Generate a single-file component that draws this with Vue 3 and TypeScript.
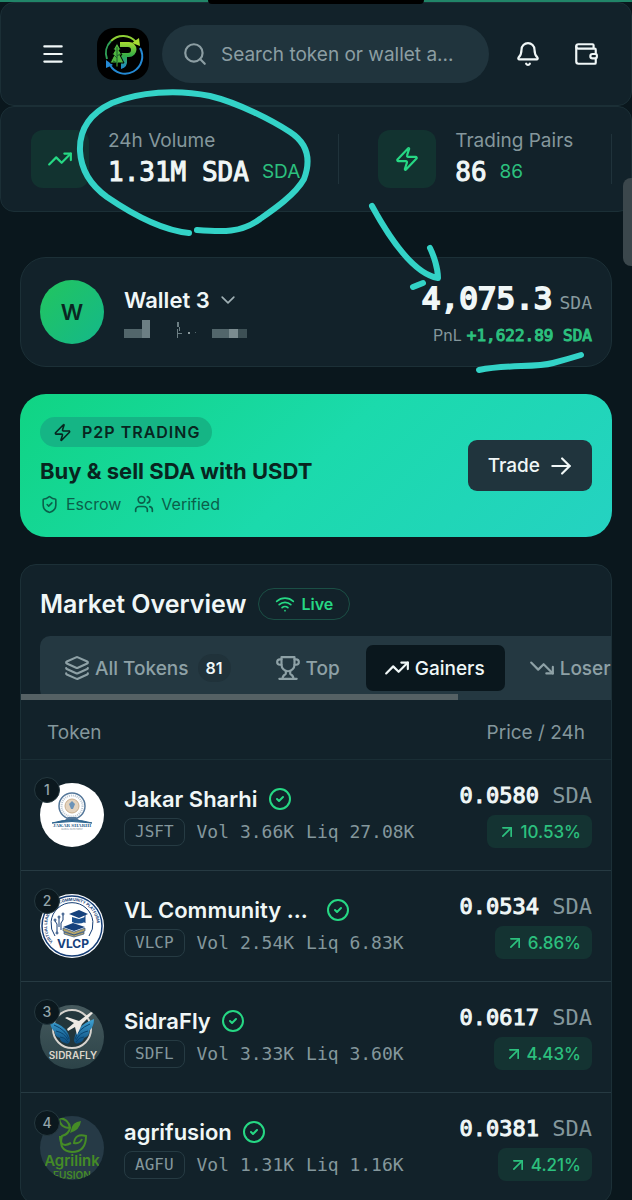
<script setup lang="ts">
import { ref } from 'vue'

interface Token {
  rank: number
  name: string
  symbol: string
  vol: string
  liq: string
  price: string
  change: string
  long?: boolean
}

type TabId = 'all' | 'top' | 'gainers' | 'losers'

const search = ref('')
const activeTab = ref<TabId>('gainers')

const icons: Record<string, string[]> = {
  menu: ['M4 5h16', 'M4 12h16', 'M4 19h16'],
  search: ['M19 11a8 8 0 1 1-16 0a8 8 0 0 1 16 0Z', 'm21 21-4.3-4.3'],
  bell: [
    'M10.27 21a2 2 0 0 0 3.46 0',
    'M3.26 15.33A1 1 0 0 0 4 17h16a1 1 0 0 0 .74-1.67C19.41 13.96 18 12.5 18 8A6 6 0 0 0 6 8c0 4.5-1.41 5.96-2.74 7.33',
  ],
  wallet: [
    'M19 7V4a1 1 0 0 0-1-1H5a2 2 0 0 0 0 4h15a1 1 0 0 1 1 1v4h-3a2 2 0 0 0 0 4h3a1 1 0 0 0 1-1v-2a1 1 0 0 0-1-1',
    'M3 5v14a2 2 0 0 0 2 2h15a1 1 0 0 0 1-1v-4',
  ],
  up: ['M16 7h6v6', 'm22 7-8.5 8.5-5-5L2 17'],
  down: ['M16 17h6v-6', 'm22 17-8.5-8.5-5 5L2 7'],
  zap: [
    'M4 14a1 1 0 0 1-.78-1.63l9.9-10.2a.5.5 0 0 1 .86.46l-1.92 6.02A1 1 0 0 0 13 10h7a1 1 0 0 1 .78 1.63l-9.9 10.2a.5.5 0 0 1-.86-.46l1.92-6.02A1 1 0 0 0 11 14z',
  ],
  chevron: ['m5 8.5 7 7 7-7'],
  shield: [
    'M20 13c0 5-3.5 7.5-7.66 8.95a1 1 0 0 1-.67-.01C7.5 20.5 4 18 4 13V6a1 1 0 0 1 1-1c2 0 4.5-1.2 6.24-2.72a1.17 1.17 0 0 1 1.52 0C14.51 3.81 17 5 19 5a1 1 0 0 1 1 1z',
    'm9 12 2 2 4-4',
  ],
  users: [
    'M16 21v-2a4 4 0 0 0-4-4H6a4 4 0 0 0-4 4v2',
    'M13 7a4 4 0 1 1-8 0a4 4 0 0 1 8 0Z',
    'M22 21v-2a4 4 0 0 0-3-3.87',
    'M16 3.13a4 4 0 0 1 0 7.75',
  ],
  arrow: ['M4 12h16', 'm13 5 7 7-7 7'],
  wifi: ['M12 20h.01', 'M2 8.82a15 15 0 0 1 20 0', 'M5 12.86a10 10 0 0 1 14 0', 'M8.5 16.43a5 5 0 0 1 7 0'],
  layers: [
    'M12.83 2.18a2 2 0 0 0-1.66 0L2.6 6.08a1 1 0 0 0 0 1.83l8.58 3.91a2 2 0 0 0 1.66 0l8.58-3.9a1 1 0 0 0 0-1.83z',
    'M2 12a1 1 0 0 0 .58.91l8.6 3.91a2 2 0 0 0 1.65 0l8.58-3.9A1 1 0 0 0 22 12',
    'M2 17a1 1 0 0 0 .58.91l8.6 3.91a2 2 0 0 0 1.65 0l8.58-3.9A1 1 0 0 0 22 17',
  ],
  trophy: [
    'M6 9H4.5a2.5 2.5 0 0 1 0-5H6',
    'M18 9h1.5a2.5 2.5 0 0 0 0-5H18',
    'M4 22h16',
    'M10 14.66V17c0 .55-.47.98-.97 1.21C7.85 18.75 7 20.24 7 22',
    'M14 14.66V17c0 .55.47.98.97 1.21C16.15 18.75 17 20.24 17 22',
    'M18 2H6v7a6 6 0 0 0 12 0V2Z',
  ],
  verified: ['M22 12a10 10 0 1 1-20 0a10 10 0 0 1 20 0Z', 'm9 12 2 2 4-4'],
  upRight: ['M7 7h10v10', 'M7 17 17 7'],
}

const tabs: { id: TabId; label: string; icon: string; count?: number }[] = [
  { id: 'all', label: 'All Tokens', icon: 'layers', count: 81 },
  { id: 'top', label: 'Top', icon: 'trophy' },
  { id: 'gainers', label: 'Gainers', icon: 'up' },
  { id: 'losers', label: 'Losers', icon: 'down' },
]

const stats = [
  { label: '24h Volume', value: '1.31M SDA', extra: 'SDA', icon: 'up' },
  { label: 'Trading Pairs', value: '86', extra: '86', icon: 'zap' },
]

const tokens: Token[] = [
  { rank: 1, name: 'Jakar Sharhi', symbol: 'JSFT', vol: '3.66K', liq: '27.08K', price: '0.0580', change: '10.53%' },
  { rank: 2, name: 'VL Community ...', symbol: 'VLCP', vol: '2.54K', liq: '6.83K', price: '0.0534', change: '6.86%', long: true },
  { rank: 3, name: 'SidraFly', symbol: 'SDFL', vol: '3.33K', liq: '3.60K', price: '0.0617', change: '4.43%' },
  { rank: 4, name: 'agrifusion', symbol: 'AGFU', vol: '1.31K', liq: '1.16K', price: '0.0381', change: '4.21%' },
]
</script>

<template>
  <div class="app">
    <div class="progress"></div>
    <div class="notch"></div>
    <div class="page-thumb"></div>

    <header class="topbar">
      <button class="icon-btn" aria-label="Menu">
        <svg class="ic s26" viewBox="0 0 24 24"><path v-for="d in icons.menu" :key="d" :d="d" /></svg>
      </button>
      <a class="brand" href="#" aria-label="Home">
        <svg viewBox="0 0 52 52">
          <defs>
            <linearGradient id="brandFill" x1="0" y1="0" x2="0" y2="1">
              <stop offset="0" stop-color="#a8dc32" />
              <stop offset="0.5" stop-color="#35ad45" />
              <stop offset="1" stop-color="#1d86d8" />
            </linearGradient>
          </defs>
          <rect width="52" height="52" rx="17" fill="#000" />
          <g fill="none" stroke-width="2">
            <path d="M14 13A17 17 0 0 1 39 14" stroke="#8fd035" />
            <path d="M43 20A17 17 0 0 1 13 37" stroke="#2489d4" />
            <path d="M10 31A17 17 0 0 1 14 13" stroke="#2fa257" />
          </g>
          <path d="M35 15l8 3-1-8z" fill="#a8dc32" />
          <path d="M9 40v-8l7 5z" fill="#2489d4" />
          <path d="M23 14h9a7 7 0 0 1 0 15h-2v3q1 7-6 9V25h7q3 0 3-3t-3-3h-8z" fill="url(#brandFill)" />
          <path d="M20 15l-4 7h2l-3 5h2l-4 8h6v4h2v-4h6l-4-8h2l-3-5h2z" fill="#4fb540" stroke="#000" />
          <path d="M20 19v17M17 27l3 3M16 33l4 2M23 26l-3 2" stroke="#1d5e2c" fill="none" />
        </svg>
      </a>
      <label class="search">
        <svg class="ic s26" viewBox="0 0 24 24"><path v-for="d in icons.search" :key="d" :d="d" /></svg>
        <input v-model="search" type="text" aria-label="Search token or wallet" placeholder="Search token or wallet a..." />
      </label>
      <nav class="actions">
        <button class="icon-btn" aria-label="Notifications">
          <svg class="ic s26" viewBox="0 0 24 24"><path v-for="d in icons.bell" :key="d" :d="d" /></svg>
        </button>
        <button class="icon-btn" aria-label="Wallet">
          <svg class="ic s26" viewBox="0 0 24 24"><path v-for="d in icons.wallet" :key="d" :d="d" /></svg>
        </button>
      </nav>
    </header>

    <section class="stats">
      <div v-for="s in stats" :key="s.label" class="stat">
        <span class="stat-icon">
          <svg class="ic s26" viewBox="0 0 24 24"><path v-for="d in icons[s.icon]" :key="d" :d="d" /></svg>
        </span>
        <div class="stat-body">
          <span class="stat-label">{{ s.label }}</span>
          <span class="stat-line"><b class="mono">{{ s.value }}</b><em>{{ s.extra }}</em></span>
        </div>
      </div>
      <svg class="ink ink-circle" viewBox="0 0 240 150">
        <path d="M113 144C83 141 50 121 31 108C13 95 5 80 4 62C3 38 17 23 36 14C63 3 100 0 134 7C163 14 197 32 214 43C234 56 234 74 228 90C219 106 197 121 184 130C165 144 147 143 121 141" />
      </svg>
    </section>

    <main>
      <section class="card wallet">
        <span class="avatar">W</span>
        <div class="wallet-id">
          <button class="wallet-name">
            Wallet 3
            <svg class="ic s20" viewBox="0 0 24 24"><path v-for="d in icons.chevron" :key="d" :d="d" /></svg>
          </button>
          <svg class="masked" viewBox="0 0 124 18" aria-hidden="true">
            <path d="M0 9h18v9H0z" fill="#52666b" /><path d="M18 0h8v18h-8z" fill="#6c7f84" />
            <path d="M53 2h2v5h-2zM55 7h1v4h-1zM53 9h1v9h-1zM54 13h4v1h-4z" fill="#6c7f84" />
            <path d="M64 12h2v2h-2z" fill="#8b9a9d" /><path d="M71 12h1v1h-1z" fill="#52666b" />
            <path d="M88 9h17v9H88z" fill="#52666b" /><path d="M105 9h9v9h-9z" fill="#7b8c90" />
            <path d="M114 9h9v9h-9z" fill="#3d5055" />
          </svg>
        </div>
        <div class="balance mono">
          <p class="total"><strong>4,075.3</strong><span>SDA</span></p>
          <p class="pnl"><span>PnL</span><b>+1,622.89 SDA</b></p>
        </div>
        <svg class="ink ink-arrow" viewBox="0 0 230 180">
          <path d="M4 7C22 40 46 75 70 79C70 70 66 57 62 49M45 88L55 84M111 171C140 165 166 169 185 164Q200 160 213 156" />
        </svg>
      </section>

      <section class="promo">
        <div class="promo-body">
          <span class="promo-tag">
            <svg class="ic s18" viewBox="0 0 24 24"><path v-for="d in icons.zap" :key="d" :d="d" /></svg>
            P2P TRADING
          </span>
          <h2>Buy &amp; sell SDA with USDT</h2>
          <div class="perks">
            <span><svg class="ic s18" viewBox="0 0 24 24"><path v-for="d in icons.shield" :key="d" :d="d" /></svg>Escrow</span>
            <span><svg class="ic s20" viewBox="0 0 24 24"><path v-for="d in icons.users" :key="d" :d="d" /></svg>Verified</span>
          </div>
        </div>
        <button class="trade">
          Trade
          <svg class="ic s26" viewBox="0 0 24 24"><path v-for="d in icons.arrow" :key="d" :d="d" /></svg>
        </button>
      </section>

      <section class="card market">
        <div class="market-head">
          <h2>Market Overview</h2>
          <span class="live">
            <svg class="ic s20" viewBox="0 0 24 24"><path v-for="d in icons.wifi" :key="d" :d="d" /></svg>
            Live
          </span>
        </div>
        <div class="tab-scroll">
          <div class="tabs" role="tablist">
            <button
              v-for="t in tabs"
              :key="t.id"
              role="tab"
              class="tab"
              :class="{ active: activeTab === t.id }"
              :aria-selected="activeTab === t.id"
              @click="activeTab = t.id"
            >
              <svg class="ic s26" viewBox="0 0 24 24"><path v-for="d in icons[t.icon]" :key="d" :d="d" /></svg>
              {{ t.label }}
              <span v-if="t.count" class="count">{{ t.count }}</span>
            </button>
          </div>
          <div class="tab-thumb"></div>
        </div>

        <table>
          <thead>
            <tr><th>Token</th><th>Price / 24h</th></tr>
          </thead>
          <tbody>
            <tr v-for="t in tokens" :key="t.symbol">
              <td>
                <div class="token">
                  <div class="logo">
                    <svg v-if="t.rank === 1" viewBox="0 0 64 64">
                      <circle cx="32" cy="32" r="32" fill="#fff" />
                      <circle cx="32" cy="23" r="13" fill="none" stroke="#54779a" stroke-width="1.500" />
                      <circle cx="32" cy="23" r="10.500" fill="none" stroke="#b9c5d0" stroke-width="2" stroke-dasharray="1 1" />
                      <circle cx="32" cy="23" r="7" fill="#e3d3bf" stroke="#c9ae8e" stroke-width="1" />
                      <path d="M29 21l3-3 3 3-2 5h-2z" fill="#6b93b8" />
                      <path d="M28 34h8l3 3H25z" fill="#54779a" />
                      <path d="M12 40Q32 34 52 40Q32 37 12 40Z" fill="#2d648e" stroke="#2d648e" />
                      <text x="32" y="44" text-anchor="middle" class="serif" font-size="5" font-weight="700" fill="#2d648e">JAKAR SHARHI</text>
                      <text x="32" y="47" text-anchor="middle" font-size="2" fill="#7e8d99">GLOBAL INVESTMENT</text>
                    </svg>
                    <svg v-else-if="t.rank === 2" viewBox="0 0 64 64">
                      <defs><path id="ring" d="M13 48A25 25 0 1 1 51 48" /></defs>
                      <circle cx="32" cy="32" r="32" fill="#fff" />
                      <circle cx="32" cy="32" r="30" fill="none" stroke="#153d75" stroke-width="1.500" />
                      <path d="M15 42A21 21 0 1 1 49 42" fill="none" stroke="#153d75" stroke-width="1" />
                      <text font-size="4" font-weight="700" fill="#153d75"><textPath href="#ring">VIRTUAL LEARNING &amp; COMMUNITY PLATFORM</textPath></text>
                      <path d="M29 20l10-4 9 4-9 4z" fill="#16417c" />
                      <path d="M32 23v5q6 3 13 0v-5l-6 2z" fill="#1d5290" />
                      <path d="M45 21v8" stroke="#16417c" />
                      <path d="M23 33l10-4 12 4-11 4z" fill="#16417c" />
                      <path d="M23 34v3l11 4 11-4v-3l-11 4zM24 38v2l10 3 10-3v-2l-10 3z" fill="#b7a56b" stroke="#16417c" stroke-width=".6" />
                      <path d="M17 38v-8l-2-3M21 36v-7l2-3v-5M19 33v-9" fill="none" stroke="#153d75" />
                      <g fill="#fff" stroke="#153d75"><circle cx="15" cy="26" r="1" /><circle cx="19" cy="23" r="1" /><circle cx="23" cy="20" r="1" /><circle cx="17" cy="39" r="1" /></g>
                      <text x="33" y="54" text-anchor="middle" font-size="12" font-weight="700" fill="#16417c">VLCP</text>
                    </svg>
                    <svg v-else-if="t.rank === 3" viewBox="0 0 64 64">
                      <defs>
                        <linearGradient id="slate" x1="0" y1="0" x2="0" y2="1"><stop offset="0" stop-color="#465a5e" /><stop offset="1" stop-color="#2c4348" /></linearGradient>
                        <linearGradient id="wing" x1="0" y1="0" x2="0" y2="1"><stop offset="0" stop-color="#3fa5d6" /><stop offset="1" stop-color="#0b4a7c" /></linearGradient>
                      </defs>
                      <circle cx="32" cy="32" r="32" fill="url(#slate)" />
                      <circle cx="32" cy="24" r="19" fill="#22363c" stroke="#d6d3ce" stroke-width="2" />
                      <path d="M30 36Q29 21 10 16Q10 23 15 27Q14 31 20 33Q20 37 25 38Q29 40 30 36ZM34 36Q35 21 54 14Q54 22 49 26Q50 31 44 33Q43 37 39 38Q35 40 34 36Z" fill="url(#wing)" />
                      <path d="M14 20Q26 25 29 34M16 26Q25 28 28 35M20 32Q25 32 28 37M50 19Q38 24 35 34M48 26Q39 28 36 35M44 32Q39 32 36 37" fill="none" stroke="#0a446f" />
                      <path d="M27 12l12 4 12-9 2 1-11 11-5 11-2-8-7 4-1-2 7-6-9-5z" fill="#eeeae4" />
                      <text x="33" y="54" text-anchor="middle" font-size="10" font-weight="600" fill="#ddd6cb">SIDRAFLY</text>
                    </svg>
                    <svg v-else viewBox="0 0 64 64">
                      <defs><clipPath id="disc"><circle cx="32" cy="32" r="32" /></clipPath></defs>
                      <circle cx="32" cy="32" r="32" fill="#263a46" />
                      <g clip-path="url(#disc)">
                        <g fill="none" stroke="#458b26" stroke-width="2">
                          <path d="M30 12Q29 3 19 2Q20 12 30 12Q29 18 22 20Q18 35 32 36Q46 36 46 20Q35 17 34 27Q40 28 42 23" />
                          <path d="M20 20Q20 33 31 27" />
                        </g>
                        <path d="M31 14Q32 6 41 5Q40 14 30 17Z" fill="#458b26" />
                        <text x="32" y="50" text-anchor="middle" font-size="15" font-weight="600" fill="#458b26">Agrilink</text>
                        <text x="32" y="63" text-anchor="middle" font-size="10" font-weight="600" fill="#458b26">FUSION</text>
                      </g>
                    </svg>
                    <span class="rank">{{ t.rank }}</span>
                  </div>
                  <div class="token-body">
                    <p class="token-name">
                      <span :class="{ long: t.long }">{{ t.name }}</span>
                      <svg class="ic s24 ok" viewBox="0 0 24 24"><path v-for="d in icons.verified" :key="d" :d="d" /></svg>
                    </p>
                    <p class="token-meta mono"><span class="sym">{{ t.symbol }}</span><span>Vol {{ t.vol }}</span><span>Liq {{ t.liq }}</span></p>
                  </div>
                </div>
              </td>
              <td>
                <div class="quote">
                  <span class="price mono"><b>{{ t.price }}</b> SDA</span>
                  <span class="chip">
                    <svg class="ic s20" viewBox="0 0 24 24"><path v-for="d in icons.upRight" :key="d" :d="d" /></svg>{{ t.change }}
                  </span>
                </div>
              </td>
            </tr>
          </tbody>
        </table>
      </section>
    </main>
  </div>
</template>

<style>
body {
  background: #0a171d;
}
</style>

<style scoped>
.app {
  position: relative;
  height: 100vh;
  overflow: hidden auto;
  scrollbar-width: none;
  background: #0a171d;
  color: #f0f7f7;
  font-family: Inter, 'Liberation Sans', sans-serif;
  font-size: 19px;
}
* {
  box-sizing: border-box;
}
p,
h2 {
  margin: 0;
}
button {
  font: inherit;
  color: inherit;
  background: none;
  border: 0;
  padding: 0;
}
.mono {
  font-family: 'DejaVu Sans Mono', 'Liberation Mono', monospace;
}
.mono b,
b.mono,
.mono strong {
  font-weight: 400;
  -webkit-text-stroke: 1px currentColor;
}
.ic {
  display: block;
  flex: none;
  fill: none;
  stroke: currentColor;
  stroke-width: 2;
  stroke-linecap: round;
  stroke-linejoin: round;
}
.s18 { width: 19px; height: 19px; }
.s20 { width: 20px; height: 20px; }
.s24 { width: 24px; height: 24px; }
.s26 { width: 26px; height: 26px; }

.progress {
  height: 2px;
  background: #218568;
}
.notch {
  position: absolute;
  top: 0;
  left: 50%;
  width: 216px;
  height: 4px;
  margin-left: -108px;
  border-radius: 0 0 8px 8px;
  background: #000;
  z-index: 2;
}
.page-thumb {
  position: absolute;
  top: 178px;
  right: 0;
  width: 9px;
  height: 88px;
  border-radius: 8px 0 0 8px;
  background: #3b474c;
  z-index: 2;
}

.topbar {
  display: flex;
  align-items: center;
  height: 104px;
  padding: 0 16px 0 23px;
  background: #12222a;
  border: 1px solid #1b2f36;
  border-radius: 14px;
}
.icon-btn {
  display: grid;
  place-items: center;
  flex: none;
  width: 58px;
  height: 58px;
}
.brand {
  flex: none;
  width: 52px;
  height: 52px;
  margin: 0 13px 0 15px;
}
.brand svg {
  display: block;
}
.search {
  flex: 1;
  min-width: 0;
  display: flex;
  align-items: center;
  gap: 13px;
  height: 58px;
  padding: 0 20px;
  border-radius: 29px;
  background: #20343d;
  color: #8c9ea3;
}
.search input {
  flex: 1;
  min-width: 0;
  padding: 0;
  border: 0;
  outline: 0;
  background: none;
  color: #f0f7f7;
  font: inherit;
}
.search input::placeholder {
  color: #8c9ea3;
  opacity: 1;
}
.actions {
  display: flex;
  margin-left: 10px;
}

.stats {
  position: relative;
  display: flex;
  align-items: center;
  gap: 39px;
  height: 106px;
  padding-left: 30px;
  background: #12222a;
  border: 1px solid #1b2f36;
  border-radius: 14px;
}
.stat {
  display: flex;
  align-items: center;
  gap: 19px;
  padding-right: 39px;
  background: linear-gradient(#20333b, #20333b) right center / 1px 50px no-repeat;
}
.stat-icon {
  display: grid;
  place-items: center;
  width: 58px;
  height: 58px;
  border-radius: 12px;
  background: #123330;
  color: #26d884;
}
.stat-body {
  display: grid;
}
.stat-label {
  color: #84979c;
  line-height: 26px;
}
.stat-line {
  display: flex;
  align-items: center;
  gap: 13px;
  line-height: 36px;
}
.stat-line b {
  font-size: 26px;
}
.stat-line em {
  font-style: normal;
  color: #2cc07e;
}

.ink {
  position: absolute;
  overflow: visible;
  fill: none;
  stroke: #33d3c7;
  stroke-width: 6;
  stroke-linecap: round;
  stroke-linejoin: round;
  pointer-events: none;
  z-index: 1;
}
.ink-circle {
  left: 75px;
  top: -18px;
  width: 240px;
  height: 150px;
}
.ink-arrow {
  right: 13px;
  top: -59px;
  width: 230px;
  height: 180px;
}

main {
  display: grid;
  gap: 27px;
  padding: 45px 20px 0;
}
.card {
  background: #12222a;
  border: 1px solid #1c3037;
}
.wallet {
  position: relative;
  display: flex;
  align-items: center;
  gap: 20px;
  height: 110px;
  padding: 0 19px;
  border-radius: 26px;
}
.avatar {
  display: grid;
  place-items: center;
  width: 64px;
  height: 64px;
  border-radius: 50%;
  background: linear-gradient(135deg, #22c55e, #14b88a);
  color: #0a2622;
  font-size: 22px;
  font-weight: 600;
}
.wallet-id {
  padding-bottom: 4px;
}
.wallet-name {
  display: flex;
  align-items: center;
  gap: 8px;
  font-size: 22px;
  line-height: 34px;
  font-weight: 600;
}
.wallet-name svg {
  color: #9fb0b4;
}
.masked {
  display: block;
  width: 124px;
  height: 18px;
  margin-top: 3px;
}
.balance {
  margin-left: auto;
  text-align: right;
}
.total {
  display: flex;
  align-items: baseline;
  justify-content: flex-end;
  gap: 7px;
  margin-top: 4px;
  line-height: 38px;
}
.total strong {
  font-size: 31px;
  -webkit-text-stroke-width: 2px;
}
.total span {
  font-size: 18px;
  color: #87999e;
}
.pnl {
  display: flex;
  align-items: baseline;
  justify-content: flex-end;
  gap: 5px;
  font-size: 16px;
  line-height: 26px;
  color: #2cc07e;
}
.pnl span {
  font-family: Inter, sans-serif;
  color: #84979c;
}

.promo {
  display: flex;
  align-items: center;
  justify-content: space-between;
  height: 143px;
  padding: 0 20px;
  border-radius: 26px;
  background: linear-gradient(135deg, #10d483, #1bdaac 50%, #25d2c2);
  color: #08251f;
}
.promo-body {
  display: grid;
  justify-items: start;
  padding-top: 2px;
}
.promo-tag {
  display: flex;
  align-items: center;
  gap: 10px;
  height: 30px;
  padding: 0 12px 0 13px;
  border-radius: 15px;
  background: #15b585;
  font-size: 16px;
  font-weight: 600;
  letter-spacing: 1px;
}
.promo h2 {
  margin-top: 8px;
  font-size: 22px;
  line-height: 32px;
  font-weight: 700;
}
.perks {
  display: flex;
  gap: 13px;
  margin-top: 5px;
  font-size: 16px;
  line-height: 24px;
  color: #0b5f4a;
}
.perks span {
  display: flex;
  align-items: center;
  gap: 7px;
}
.trade {
  display: flex;
  align-items: center;
  gap: 8px;
  height: 51px;
  padding: 0 18px 0 20px;
  border-radius: 9px;
  background: #20343d;
  color: #f0f7f7;
  font-weight: 500;
}

.market {
  overflow: hidden;
  border-radius: 16px;
}
.market-head {
  display: flex;
  align-items: center;
  gap: 12px;
  padding: 23px 19px 16px;
}
.market-head h2 {
  font-size: 25px;
  line-height: 32px;
  font-weight: 600;
}
.live {
  display: flex;
  align-items: center;
  gap: 6px;
  height: 32px;
  padding: 0 16px;
  border: 1px solid #1b4f45;
  border-radius: 16px;
  color: #26d884;
  font-size: 16px;
  font-weight: 600;
}
.tab-scroll {
  position: relative;
  overflow: hidden;
  padding-left: 19px;
}
.tabs {
  display: flex;
  gap: 6px;
  width: max-content;
  padding: 9px 6px;
  border-radius: 10px;
  background: #243841;
}
.tab {
  display: flex;
  align-items: center;
  gap: 5px;
  height: 46px;
  padding: 0 20px 0 18px;
  border-radius: 7px;
  color: #8ea1a6;
  font-weight: 500;
  white-space: nowrap;
}
.tab.active {
  background: #0a171d;
  color: #f0f7f7;
}
.count {
  display: grid;
  place-items: center;
  height: 28px;
  margin-left: 4px;
  padding: 0 8px;
  border-radius: 14px;
  background: #20323a;
  color: #f0f7f7;
  font-size: 16px;
  font-weight: 600;
}
.tab-thumb {
  position: absolute;
  left: 0;
  bottom: 0;
  width: 74%;
  height: 6px;
  background: #556164;
}

table {
  width: 100%;
  border-collapse: collapse;
}
th {
  height: 59px;
  padding: 6px 26px 0;
  text-align: left;
  color: #84979c;
  font-weight: 400;
}
th + th,
td + td {
  text-align: right;
}
td {
  height: 111px;
  padding: 0 19px;
  border-top: 1px solid #263a42;
}
tbody tr:first-child td {
  border-top-color: #1a2e35;
}
.token {
  display: flex;
  align-items: center;
  gap: 20px;
}
.logo {
  position: relative;
  width: 64px;
  height: 64px;
}
.logo svg {
  display: block;
  width: 64px;
  height: 64px;
}
.logo .serif {
  font-family: 'Liberation Serif', serif;
}
.rank {
  position: absolute;
  left: -6px;
  top: -6px;
  display: grid;
  place-items: center;
  width: 26px;
  height: 26px;
  border: 1px solid #25383f;
  border-radius: 50%;
  background: #0b181e;
  color: #93a5aa;
  font-size: 14px;
  font-weight: 500;
}
.token-name {
  display: flex;
  align-items: center;
  gap: 10px;
  font-size: 22px;
  line-height: 30px;
  font-weight: 600;
  white-space: nowrap;
}
.long {
  width: 192px;
}
.ok {
  color: #26d884;
}
.token-meta {
  display: flex;
  align-items: center;
  gap: 12px;
  margin-top: 4px;
  font-size: 18px;
  line-height: 28px;
  color: #84979c;
  white-space: nowrap;
}
.sym {
  padding: 0 10px;
  border: 1px solid #263b43;
  border-radius: 8px;
  font-size: 16px;
  line-height: 26px;
}
.quote {
  display: grid;
  justify-items: end;
  gap: 4px;
}
.price {
  font-size: 22px;
  line-height: 30px;
  color: #84979c;
  white-space: nowrap;
}
.price b {
  color: #f0f7f7;
}
.chip {
  display: flex;
  align-items: center;
  gap: 3px;
  height: 33px;
  padding: 0 11px 0 10px;
  border-radius: 8px;
  background: #143332;
  color: #2cc07e;
  font-size: 17px;
  font-weight: 500;
}
</style>
